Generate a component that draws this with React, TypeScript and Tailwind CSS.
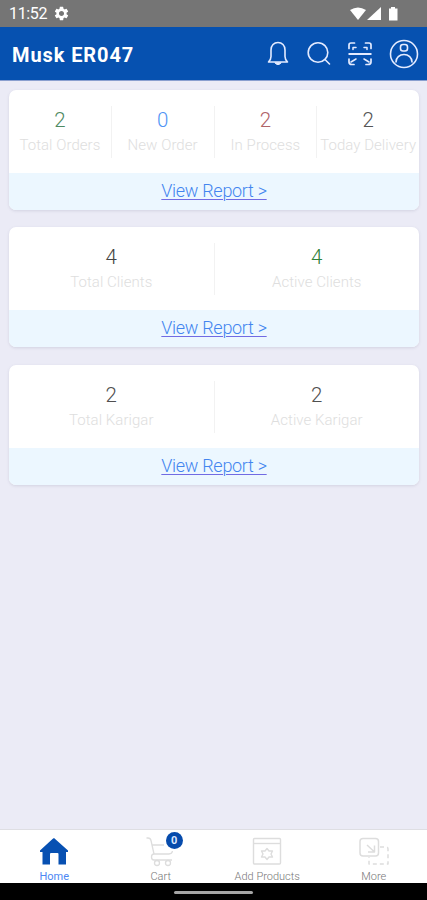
import { ReactNode } from "react"
import { MdSettings } from "react-icons/md"

type Stat = { value: string, label: string, color: string }

const CARDS: Stat[][] = [
    [
        { value: "2", label: "Total Orders", color: "text-[#4f8a62]" },
        { value: "0", label: "New Order", color: "text-[#4f94f5]" },
        { value: "2", label: "In Process", color: "text-[#b06468]" },
        { value: "2", label: "Today Delivery", color: "text-[#555555]" },
    ],
    [
        { value: "4", label: "Total Clients", color: "text-[#444444]" },
        { value: "4", label: "Active Clients", color: "text-[#2f8139]" },
    ],
    [
        { value: "2", label: "Total Karigar", color: "text-[#505050]" },
        { value: "2", label: "Active Karigar", color: "text-[#505050]" },
    ],
]

function StatusBar() {
    return (
        <div className="flex h-[27px] shrink-0 items-center justify-between bg-[#757575] pl-[9px] pr-[28px] text-white">
            <div className="flex items-center gap-[6px]">
                <span className="text-[16px] leading-none tracking-[-0.35px]">11:52</span>
                <MdSettings className="size-[17px]" />
            </div>
            <svg className="mt-px h-[16px] w-[49px]" viewBox="0 0 49 16" fill="currentColor">
                <path d="M0 4 Q8 -1 16 4 L8 14 Z" />
                <path d="M31 1 V14 H17 Z" />
                <path d="M41 1 H45 V2.5 H47.5 V14.5 H39 V2.5 H41 Z" />
            </svg>
        </div>
    )
}

function Header() {
    return (
        <header className="flex h-[54px] shrink-0 items-center justify-between border-b border-[#8a9fcf] bg-[#0651b0] pl-[12px] pr-[8px] text-[#e4ebff]">
            <h1 className="pt-[2px] text-[20px] font-bold leading-none tracking-[0.9px] text-white">Musk ER047</h1>
            <svg className="h-[30px] w-[154px]" viewBox="0 0 154 30" fill="none" stroke="currentColor" strokeWidth="1.6" strokeLinecap="round" strokeLinejoin="round">
                <path d="M3.500 23 H22.500 C20.500 21 20 20 20 17.500 V11 C20 6.500 17 3.500 13 3.500 S6 6.500 6 11 V17.500 C6 20 5.500 21 3.500 23 Z" />
                <path d="M10 24 Q13 27.500 16 24 Z" fill="currentColor" strokeWidth="1" />
                <circle cx="53" cy="13.500" r="9.800" />
                <path d="M60 20.500 L64.500 25" />
                <path d="M83.500 15 H106.500" strokeWidth="2" strokeLinecap="butt" />
                <path d="M84 9.500 V6 Q84 4 86 4 H89.500 M100.500 4 H104 Q106 4 106 6 V9.500 M84 20 V23 Q84 25.500 87 25.500 H89 M101 25.500 H103 Q106 25.500 106 23 V20" strokeWidth="1.700" />
                <path d="M88 10.500 V8.500 H91 M99 8.500 H102 V10.500 M86 23 L91 20 M104 23 L99 20" strokeWidth="1.500" />
                <circle cx="139" cy="15" r="13.500" />
                <rect x="135.500" y="5.500" width="7" height="6.500" rx="2.500" />
                <path d="M131 23 C131 18.500 134.500 15.500 139 15.500 S147 18.500 147 23" />
            </svg>
        </header>
    )
}

function StatCard({ stats }: { stats: Stat[] }) {
    return (
        <section className="h-[120px] overflow-hidden rounded-[7px] bg-white shadow-[0_1px_3px_rgba(80,80,120,0.16)]">
            <div className="flex h-[83px] py-4">
                {
                    stats.map((stat, i) => (
                        <div key={stat.label}
                            className={`flex h-[52px] min-w-0 flex-1 flex-col items-center font-light ${i > 0 ? "border-l border-[#f2f2f2]" : ""}`}
                        >
                            <span className={`h-[26px] text-[20.5px] leading-[28px] ${stat.color}`}>{stat.value}</span>
                            <span className="whitespace-nowrap text-[15px] leading-[26px] tracking-[0.05px] text-[#dedede]">{stat.label}</span>
                        </div>
                    ))
                }
            </div>
            <div className="flex h-[37px] justify-center bg-[#ecf7ff]">
                <a href="#" className="text-[18px] font-light leading-[35px] tracking-[-0.3px] text-[#4385ef] underline decoration-[#716be3] decoration-1 underline-offset-2">
                    View Report &gt;
                </a>
            </div>
        </section>
    )
}

function NavItem({ label, active, children }: { label: string, active?: boolean, children: ReactNode }) {
    return (
        <a href="#" className="flex flex-1 flex-col items-center pt-[6px]">
            <span className="relative block h-[33px] w-[32px] text-[#dddddd]">{children}</span>
            <span className={`whitespace-nowrap text-[11px] leading-[15px] ${active ? "text-[#4d87f3]" : "font-light text-[#777777]"}`}>{label}</span>
        </a>
    )
}

function BottomNav() {
    return (
        <nav className="flex h-[54px] shrink-0 border-t border-[#dedee3] bg-white pl-px">
            <NavItem label="Home" active>
                <svg className="h-[33px] w-[32px]" viewBox="0 0 32 33" fill="#0750b2">
                    <path d="M16 2 L30 14.500 V16 H28 V28.500 H20.500 V18 Q20.500 17 19.500 17 H13 Q12 17 12 18 V28.500 H4.500 V16 H2 V14.500 L14.500 3 Z" />
                </svg>
            </NavItem>
            <NavItem label="Cart">
                <svg className="h-[33px] w-[32px]" viewBox="0 0 32 33" fill="none" stroke="currentColor" strokeWidth="1.3" strokeLinejoin="round">
                    <path d="M1.500 2 H3 Q5.500 2 6 4.500 L9 18 H24 Q27 18 27.500 15 M7 9 H19 M9 18 Q6.500 18 6.500 21 T9 24 H27" />
                    <circle cx="12" cy="27" r="2.500" />
                    <circle cx="23" cy="27" r="2.500" />
                </svg>
                <span className="absolute left-[21px] top-[-4px] flex size-[17px] items-center justify-center rounded-full bg-[#064bac] text-[11px] font-bold leading-none text-[#dce8ff]">0</span>
            </NavItem>
            <NavItem label="Add Products">
                <svg className="h-[33px] w-[32px]" viewBox="0 0 32 33" fill="none" stroke="currentColor" strokeWidth="1.4" strokeLinejoin="round">
                    <rect x="2.500" y="2.500" width="27" height="25.500" rx="1" />
                    <path d="M2.500 7.500 H29.500" />
                    <path d="M16 12.500 L18 15 H21.500 L20 18 L21.500 21 H18 L16 23.500 L14 21 H10.500 L12 18 L10.500 15 H14 Z" />
                </svg>
            </NavItem>
            <NavItem label="More">
                <svg className="h-[33px] w-[32px]" viewBox="0 0 32 33" fill="none" stroke="currentColor" strokeWidth="1.5" strokeLinejoin="round">
                    <rect x="2" y="2.500" width="18.500" height="17.500" rx="3" />
                    <path d="M9 9 L16 15.500 M10 16 H16.500 V9.500" />
                    <path d="M22 11 H28 Q30 11 30 13 V28 H11 V21" strokeDasharray="4 3" />
                </svg>
            </NavItem>
        </nav>
    )
}

export default function App() {
    return (
        <div className="flex h-[900px] w-[427px] flex-col overflow-hidden bg-[#ebebf6] font-[Roboto,sans-serif]">
            <StatusBar />
            <Header />
            <main className="flex flex-1 flex-col gap-[17.25px] pl-[9px] pr-[8px] pt-[9px]">
                {
                    CARDS.map((stats, i) => <StatCard key={i} stats={stats} />)
                }
            </main>
            <BottomNav />
            <div className="flex h-[17px] shrink-0 justify-center bg-black pt-[8px]">
                <div className="h-[3px] w-[79px] rounded-full bg-[#a5a5a5]" />
            </div>
        </div>
    )
}
